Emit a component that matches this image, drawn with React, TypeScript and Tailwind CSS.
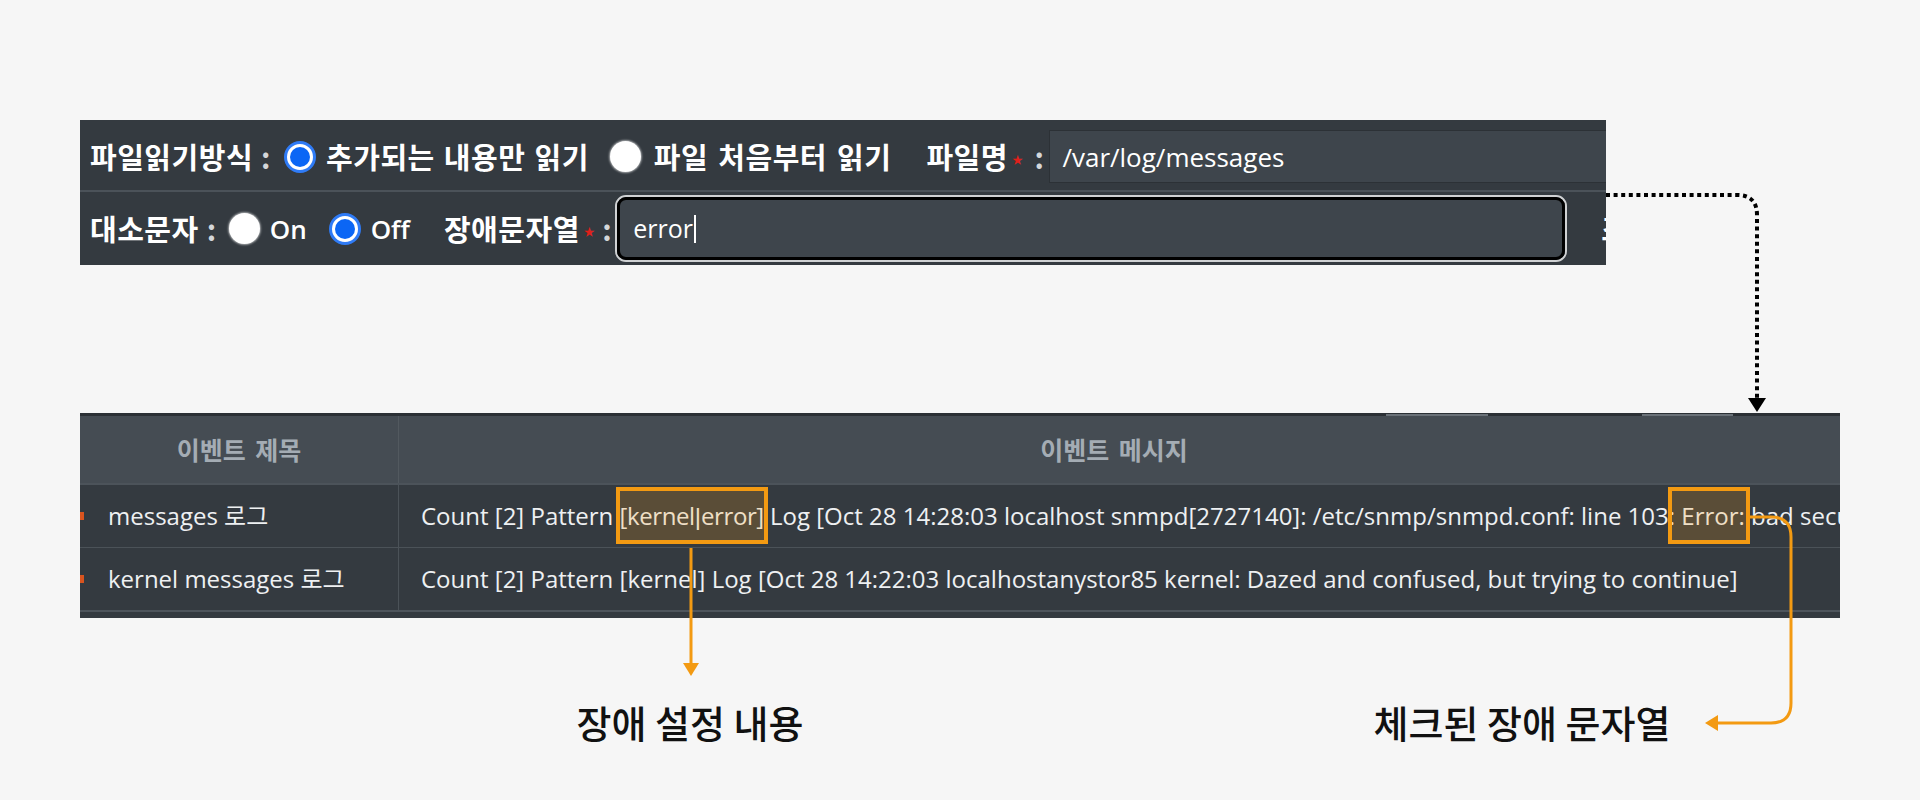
import React from "react";

function RadioOn() {
  return (
    <span className="flex h-[32px] w-[32px] shrink-0 items-center justify-center rounded-full border-[3px] border-[#2f7bf6] bg-white p-[3px]">
      <span className="block h-full w-full rounded-full bg-[#0b66f5]" />
    </span>
  );
}

function RadioOff() {
  return <span className="block h-[31px] w-[31px] shrink-0 rounded-full bg-white shadow-[0_0_2px_1px_rgba(255,255,255,0.55)]" />;
}

function Star() {
  return <span className="ml-[4px] mt-[6px] text-[11px] leading-none text-[#e0201b]">★</span>;
}

function Colon() {
  return <span className="text-[#d4d7da]">:</span>;
}

export default function App() {
  const ko = "font-['Noto_Sans_CJK_KR','Noto_Sans',sans-serif]";
  const ui = "font-['Open_Sans','Noto_Sans_CJK_KR',sans-serif]";
  return (
    <div className={`relative h-[800px] w-[1920px] overflow-hidden bg-[#f6f6f6] ${ko}`}>
      <div className="flex flex-col pt-[120px]">
        {/* Top settings panel */}
        <div className="ml-[80px] flex h-[145px] w-[1526px] flex-col overflow-hidden bg-[#343a40] text-white">
          {/* Row 1 */}
          <div className="flex h-[72px] shrink-0 flex-col border-b-[2px] border-[#4b5259] pt-[10px]">
            <div className="flex h-[53px] items-center whitespace-nowrap pl-[10px] text-[29px] font-bold leading-none tracking-[0.5px]">
              <span>파일읽기방식</span>
              <span className="ml-[8px]"><Colon /></span>
              <span className="ml-[13px]"><RadioOn /></span>
              <span className="ml-[10px] [word-spacing:2px]">추가되는 내용만 읽기</span>
              <span className="ml-[21px]"><RadioOff /></span>
              <span className="ml-[13px] [word-spacing:3px]">파일 처음부터 읽기</span>
              <span className="ml-[35px]">파일명</span>
              <Star />
              <span className="ml-[11px]"><Colon /></span>
              <div className={`ml-[5px] flex h-[53px] w-[700px] shrink-0 items-center border border-[#2c3136] bg-[#3e454c] pl-[12px] text-[26px] font-normal tracking-normal ${ui}`}>
                /var/log/messages
              </div>
            </div>
          </div>
          {/* Row 2 */}
          <div className="flex h-[73px] shrink-0 items-center whitespace-nowrap pl-[10px] text-[29px] font-bold leading-none tracking-[0.5px]">
            <span>대소문자</span>
            <span className="ml-[8px]"><Colon /></span>
            <span className="ml-[12px]"><RadioOff /></span>
            <span className={`ml-[10px] text-[26px] font-semibold tracking-normal ${ui}`}>On</span>
            <span className="ml-[22px]"><RadioOn /></span>
            <span className={`ml-[10px] text-[26px] font-semibold tracking-normal ${ui}`}>Off</span>
            <span className="ml-[34px]">장애문자열</span>
            <Star />
            <span className="ml-[7px]"><Colon /></span>
            <div className="ml-[3px] h-[67px] w-[952px] shrink-0 rounded-[11px] border-[2px] border-[#cfd1d3]">
              <div className={`flex h-full items-center rounded-[9px] border-[3px] border-black bg-[#3e454c] pl-[13px] text-[25px] font-normal tracking-normal ${ui}`}>
                <span>error</span>
                <span className="ml-[1px] h-[28px] w-[2px] bg-white" />
              </div>
            </div>
            <span className="ml-[34px]">조치</span>
          </div>
        </div>

        {/* Event table */}
        <div className={`ml-[80px] mt-[148px] flex w-[1760px] flex-col overflow-hidden bg-[#343a40] ${ui}`}>
          <div className="flex h-[3px] bg-[#2b3035]">
            <div className="w-[1306px]" />
            <div className="mt-[1px] h-[2px] w-[102px] bg-[#6a7178]" />
            <div className="w-[154px]" />
            <div className="mt-[1px] h-[2px] w-[91px] bg-[#6a7178]" />
          </div>
          <div className={`flex h-[67px] bg-[#454c53] text-[25px] font-bold text-[#a4acb4] [word-spacing:4px] ${ko}`}>
            <div className="flex w-[319px] shrink-0 items-center justify-center border-r border-[#52595f]">이벤트 제목</div>
            <div className="flex w-[1430px] shrink-0 items-center justify-center">이벤트 메시지</div>
          </div>
          <div className="h-[2px] bg-[#4c535a]" />
          {[
            {
              title: "messages 로그",
              msg: (
                <>
                  Count [2] Pattern{" "}
                  <span className="relative tracking-[-0.4px]">
                    [kernel<span className="font-['Liberation_Sans',sans-serif] tracking-normal">|</span>error]
                    <span className="absolute bottom-[-12px] left-[-4px] right-[-4px] top-[-12px] border-[4px] border-[#f39a12] bg-[#f39a12]/20" />
                  </span>{" "}
                  Log [Oct 28 14:28:03 localhost snmpd[2727140]: /etc/snmp/snmpd.conf: line 103:{" "}
                  <span className="relative">
                    Error:
                    <span className="absolute bottom-[-12px] left-[-13px] right-[-5px] top-[-12px] border-[4px] border-[#f39a12] bg-[#f39a12]/20" />
                  </span>{" "}
                  bad secu
                </>
              ),
            },
            {
              title: "kernel messages 로그",
              msg: <>Count [2] Pattern [kernel] Log [Oct 28 14:22:03 localhostanystor85 kernel: Dazed and confused, but trying to continue]</>,
            },
          ].map((r, i) => (
            <React.Fragment key={i}>
              <div className="flex h-[62px] text-[24px] text-[#eef0f2]">
                <div className="flex w-[319px] shrink-0 items-center border-r border-[#4b5258]">
                  <span className="h-[8px] w-[4px] bg-[#d9541f]" />
                  <span className="ml-[24px] whitespace-nowrap">{r.title}</span>
                </div>
                <div className="flex min-w-0 flex-1 items-center overflow-hidden whitespace-nowrap pl-[22px]">
                  <span className="whitespace-pre">{r.msg}</span>
                </div>
              </div>
              <div className={i === 0 ? "h-[1px] bg-[#4b5258]" : "h-[2px] bg-[#4e555c]"} />
            </React.Fragment>
          ))}
          <div className="h-[6px]" />
        </div>

        {/* Annotation labels */}
        <div className="mt-[84px] flex h-[40px] items-center text-[38px] font-medium leading-none text-[#111]">
          <span className="ml-[572px] w-[236px] whitespace-nowrap text-center">장애 설정 내용</span>
          <span className="ml-[562px] w-[304px] whitespace-nowrap text-center">체크된 장애 문자열</span>
        </div>
      </div>

      {/* Connector arrows */}
      <svg className="pointer-events-none absolute left-0 top-0" width="1920" height="800" viewBox="0 0 1920 800">
        <path d="M1606 195 H1737 Q1757 195 1757 215 V398" fill="none" stroke="#000" strokeWidth="4" strokeDasharray="4 3.6" />
        <polygon points="1748,398 1766,398 1757,412" fill="#000" />
        <path d="M691 548 V664" fill="none" stroke="#f39a12" strokeWidth="3" />
        <polygon points="683,663 699,663 691,676" fill="#f39a12" />
        <path d="M1748 517 H1771 Q1791 517 1791 537 V703 Q1791 723 1771 723 H1716" fill="none" stroke="#f39a12" strokeWidth="3" />
        <polygon points="1718,715 1718,731 1705,723" fill="#f39a12" />
      </svg>
    </div>
  );
}
